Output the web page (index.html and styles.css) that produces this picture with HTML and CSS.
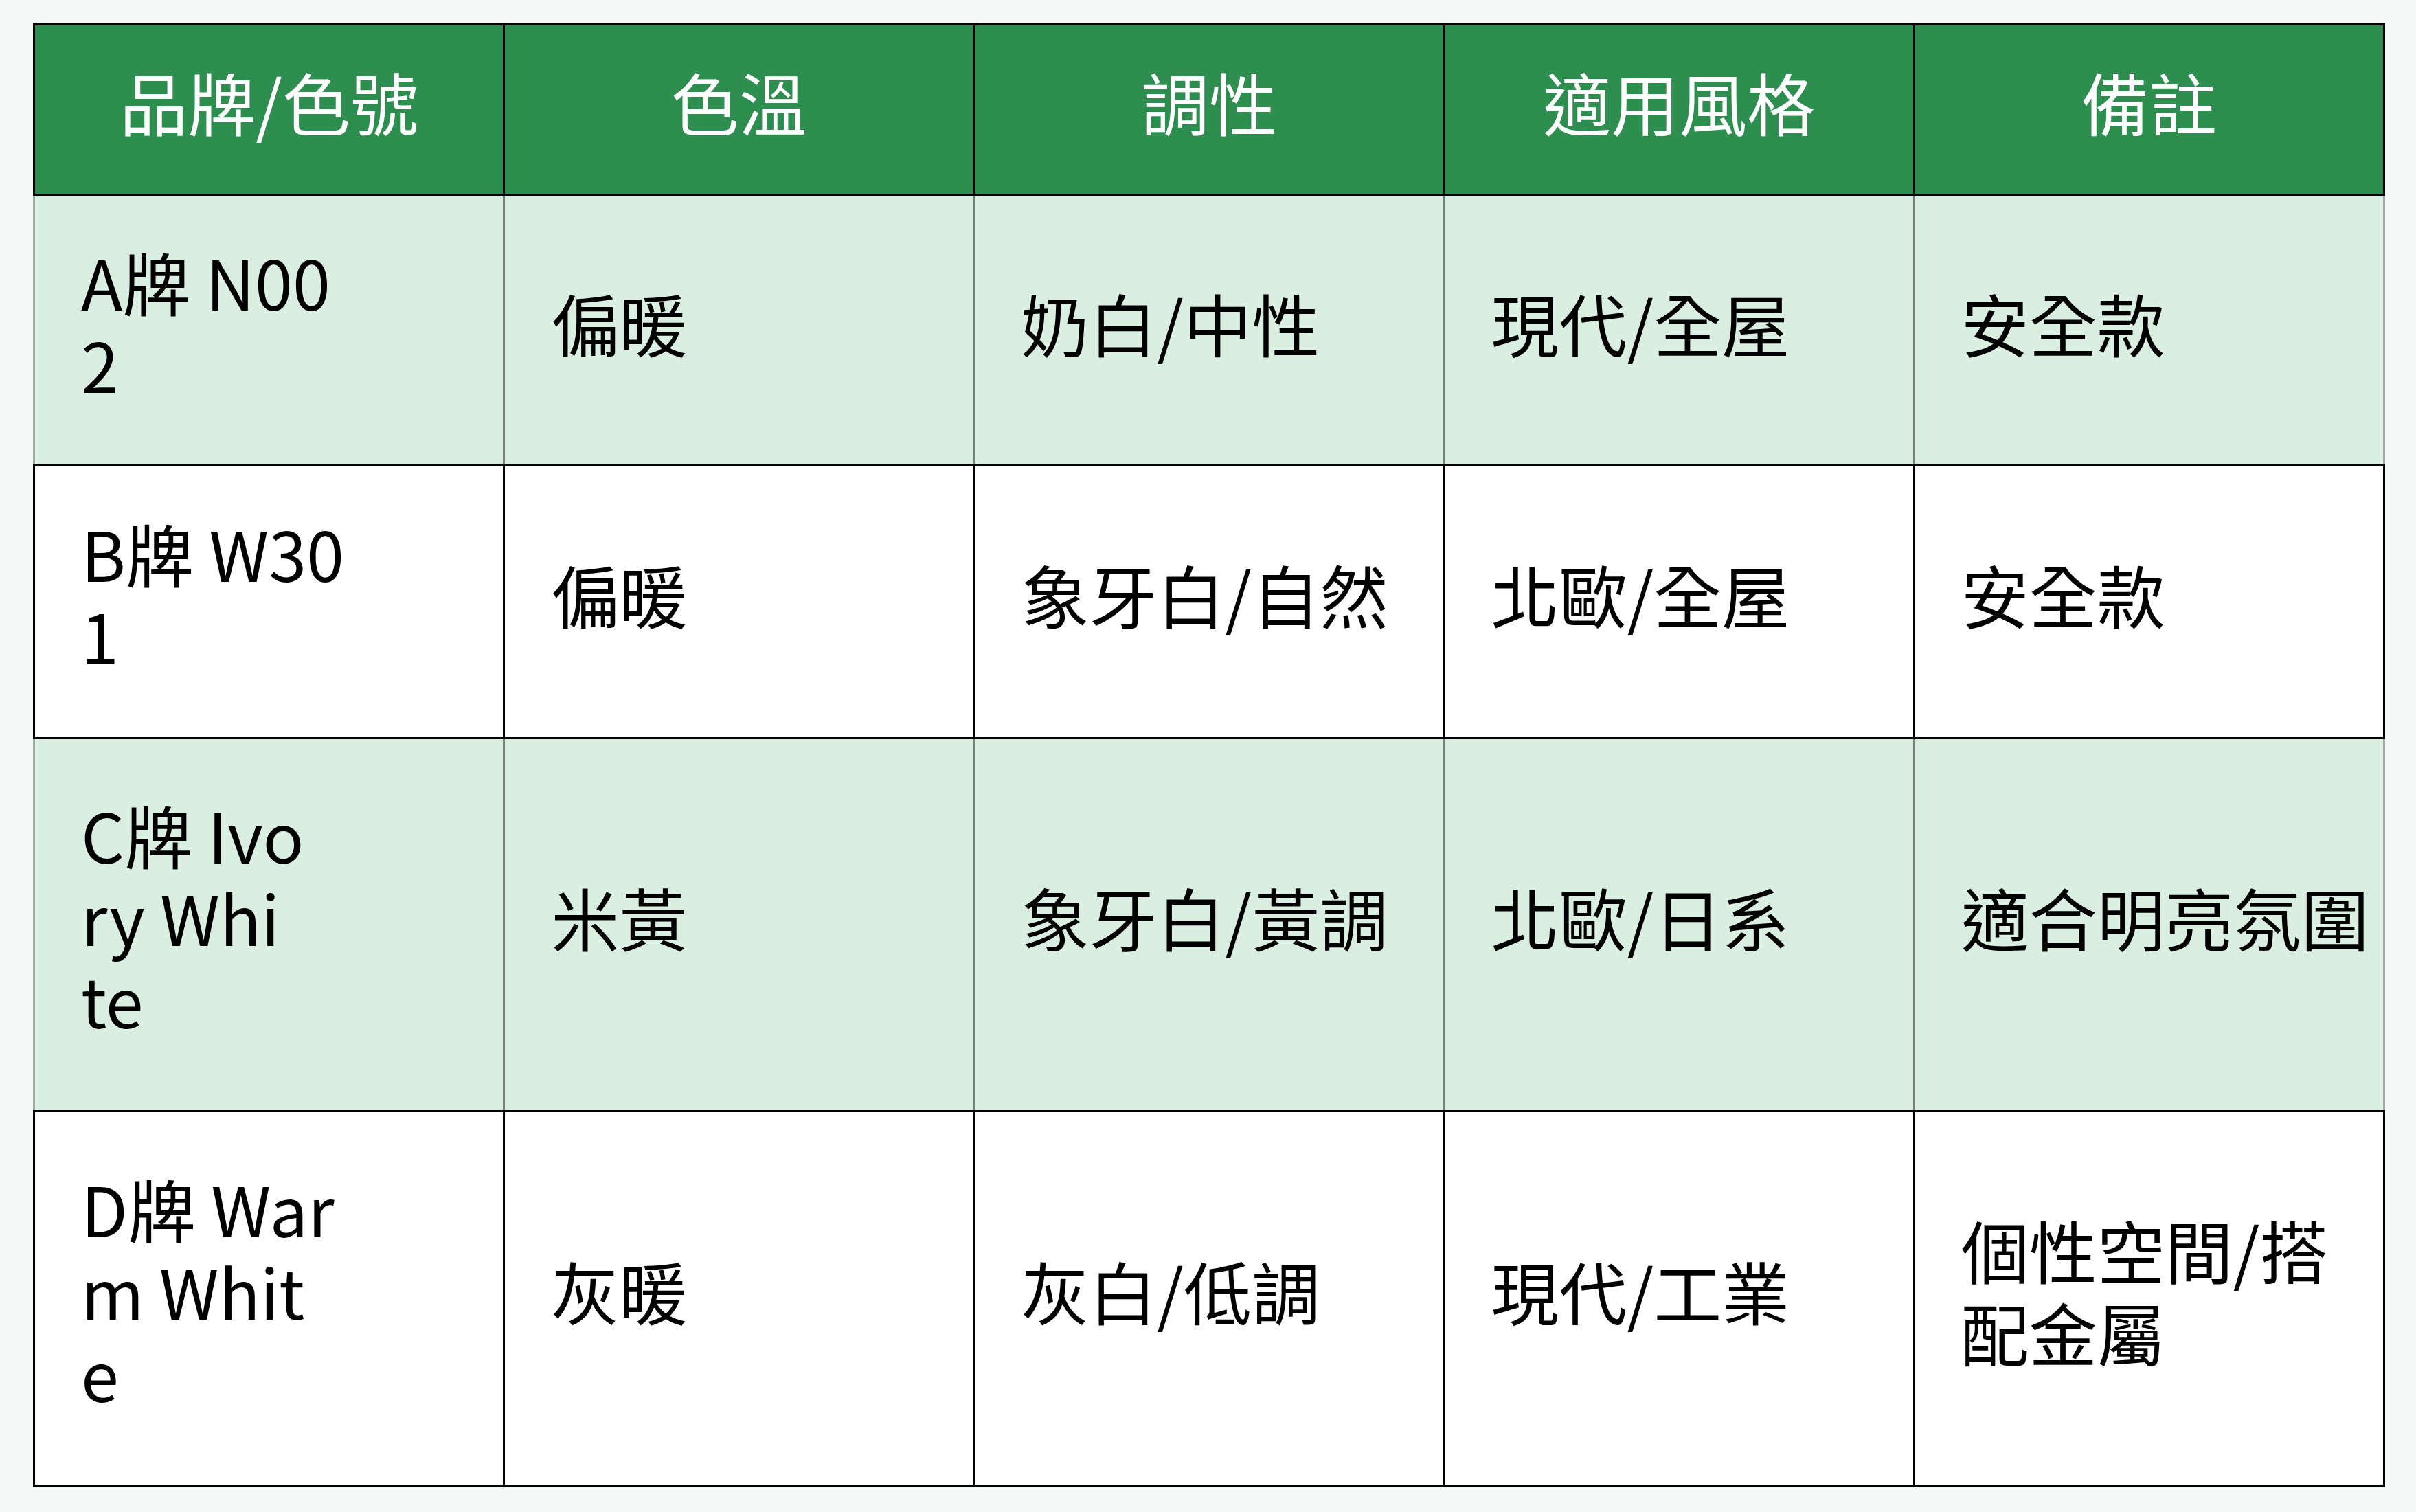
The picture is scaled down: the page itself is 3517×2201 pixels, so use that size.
FILE: index.html
```html
<!DOCTYPE html>
<html lang="zh-Hant">
<head>
<meta charset="utf-8">
<title>色號比較</title>
<link rel="stylesheet" href="styles.css">
</head>
<body>
<div class="page">
  <table class="paint-table">
    <thead>
      <tr class="head-row">
        <th>品牌/色號</th>
        <th>色溫</th>
        <th>調性</th>
        <th>適用風格</th>
        <th>備註</th>
      </tr>
    </thead>
    <tbody>
      <tr class="row tint r1">
        <td>A牌 N00<br>2</td>
        <td>偏暖</td>
        <td>奶白/中性</td>
        <td>現代/全屋</td>
        <td>安全款</td>
      </tr>
      <tr class="row plain r2">
        <td>B牌 W30<br>1</td>
        <td>偏暖</td>
        <td>象牙白/自然</td>
        <td>北歐/全屋</td>
        <td>安全款</td>
      </tr>
      <tr class="row tint r3">
        <td>C牌 Ivo<br>ry Whi<br>te</td>
        <td>米黃</td>
        <td>象牙白/黃調</td>
        <td>北歐/日系</td>
        <td>適合明亮氛圍</td>
      </tr>
      <tr class="row plain r4">
        <td>D牌 War<br>m Whit<br>e</td>
        <td>灰暖</td>
        <td>灰白/低調</td>
        <td>現代/工業</td>
        <td>個性空間/搭<br>配金屬</td>
      </tr>
    </tbody>
  </table>
</div>
</body>
</html>
```

FILE: styles.css
```css
html, body {
  margin: 0;
  padding: 0;
  background: #f3f8f6;
}

.page {
  padding: 34px 0 0 48px;
  font-family: "Noto Sans CJK TC", "Noto Sans", sans-serif;
}

.paint-table {
  border-collapse: collapse;
  table-layout: fixed;
  width: 3424px;
  font-size: 99px;
  line-height: 120px;
  color: #000;
}

.paint-table th,
.paint-table td {
  border: 3px solid #000;
  white-space: nowrap;
  vertical-align: middle;
}

.head-row {
  height: 248px;
}

.head-row th {
  background: #2e8e4f;
  color: #fff;
  font-weight: 400;
  text-align: center;
  padding: 0 0 26px 0;
}

.row td {
  text-align: left;
  padding: 0 0 24px 67px;
}

.tint td {
  background: #dbeee2;
  border-left-color: #76807a;
  border-right-color: #76807a;
}

.tint td:first-child {
  border-left-color: #a3a9a6;
}

.tint td:last-child {
  border-right-color: #a3a9a6;
}

.plain td {
  background: #ffffff;
}

.r1 { height: 394px; }
.r2 { height: 397px; }
.r3 { height: 543px; }
.r4 { height: 545px; }
```
